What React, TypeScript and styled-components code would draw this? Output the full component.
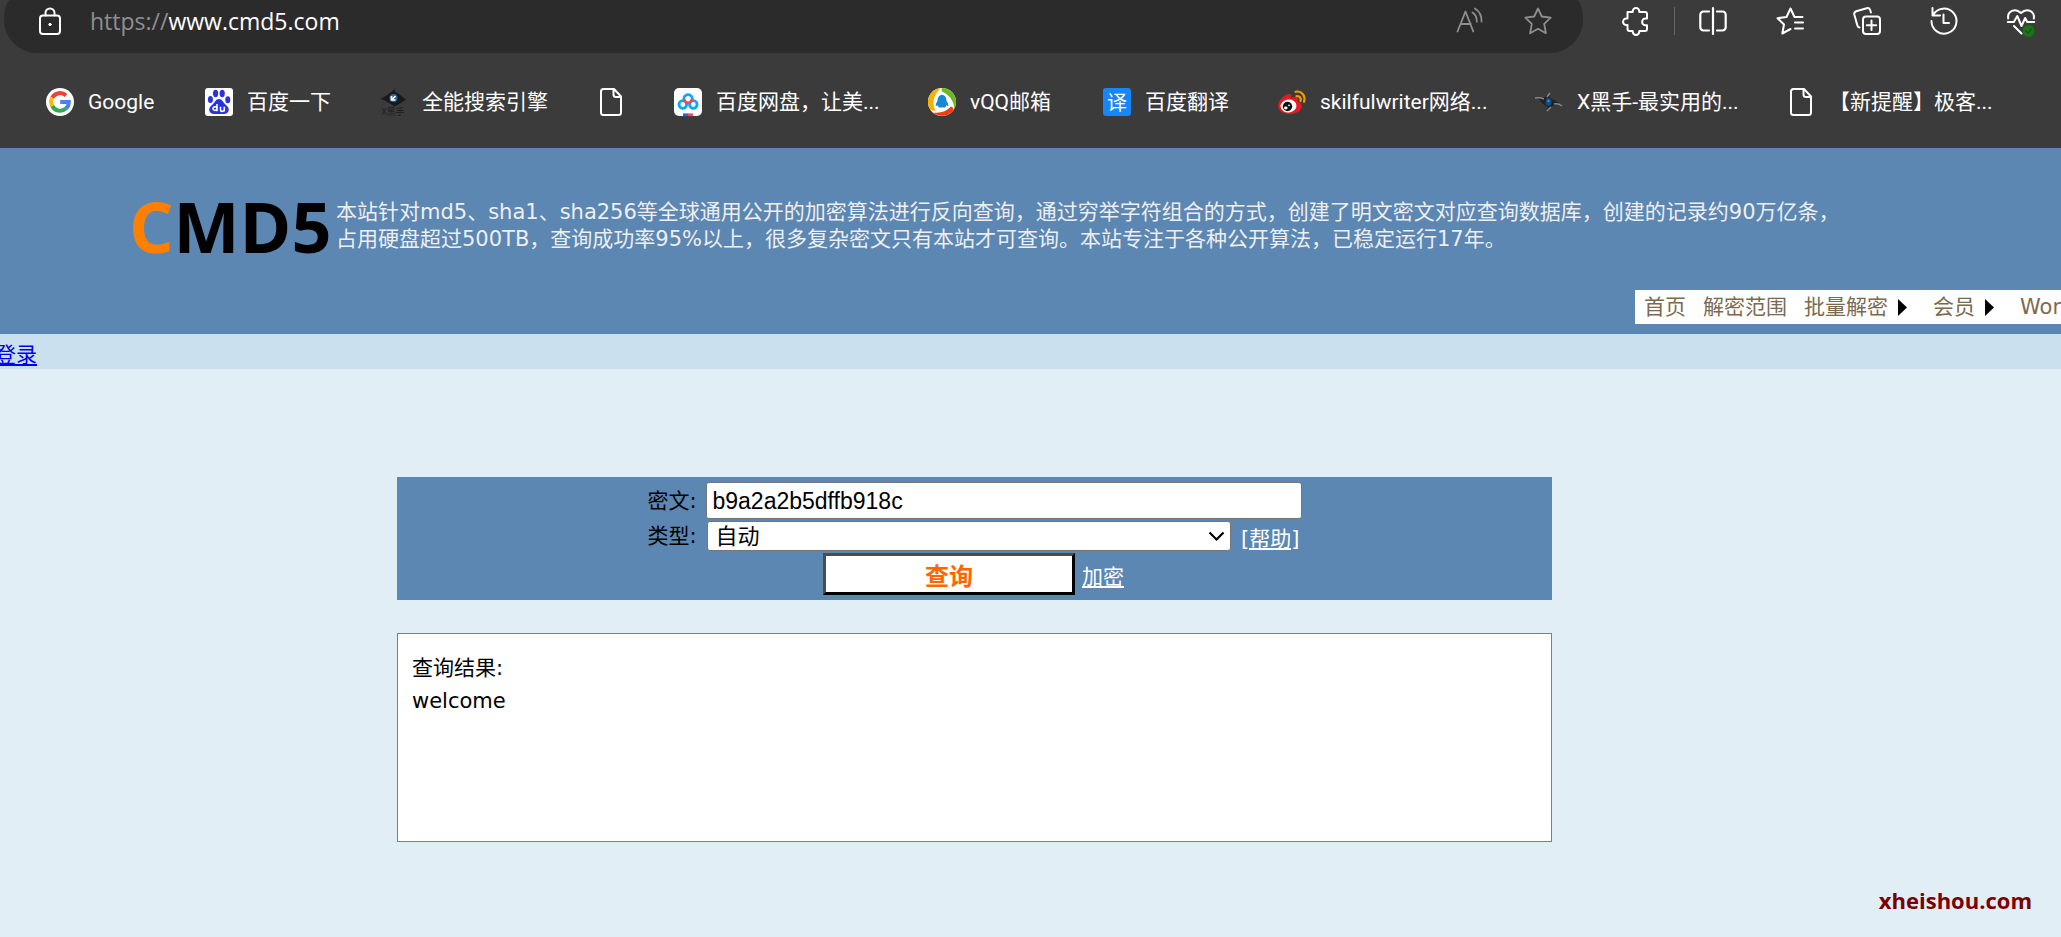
import React from 'react';
import styled, { createGlobalStyle } from 'styled-components';

const siteFont = '"DejaVu Sans", "Noto Sans CJK SC", sans-serif';
const chromeFont = '"Open Sans", "Noto Sans CJK SC", sans-serif';
const bookmarkFont = 'Roboto, "Noto Sans CJK SC", sans-serif';

const GlobalStyle = createGlobalStyle`
  *, *::before, *::after { box-sizing: border-box; }
  html { background: #e1eef6; }
  body { margin: 0; overflow-x: hidden; font-family: ${siteFont}; font-size: 21px; color: #000; }
  button, input, select { font: inherit; margin: 0; }
  svg { display: block; flex: none; overflow: visible; }
`;

const Page = styled.div`
  display: flex;
  flex-direction: column;
  min-height: 100vh;
`;

/* ---------- browser chrome ---------- */

const Browser = styled.header`
  background: #3b3b3b;
  font-family: ${chromeFont};
  color: #fff;
`;

const Toolbar = styled.div`
  display: flex;
  padding: 0 26px 0 4px;
`;

const AddressBar = styled.div`
  flex: 1;
  display: flex;
  align-items: center;
  height: 53px;
  padding: 0 31px 11px 32px;
  background: #2b2b2b;
  border-radius: 7px 7px 33px 33px / 20px 20px 33px 33px;
`;

const Url = styled.label`
  flex: 1;
  display: flex;
  align-items: center;
  margin-left: 26px;
  font-size: 23px;
  line-height: 32px;
  color: #8f8f8f;
`;

const UrlInput = styled.input`
  flex: 1;
  min-width: 0;
  padding: 0;
  border: 0;
  outline: 0;
  background: transparent;
  color: #fff;
`;

const IconButton = styled.button<{ $muted?: boolean }>`
  display: block;
  width: 28px;
  height: 28px;
  padding: 0;
  border: 0;
  background: none;
  color: ${(p) => (p.$muted ? '#8f8f8f' : '#fff')};
`;

const AddressActions = styled.div`
  display: flex;
  gap: 40px;
`;

const Tools = styled.div`
  display: flex;
  gap: 49px;
  margin-left: 39px;
  padding-top: 7px;
`;

const ToolPair = styled.div`
  display: flex;
  gap: 24px;
`;

const Divider = styled.span`
  width: 1px;
  height: 28px;
  background: #666;
`;

const Bookmarks = styled.nav`
  display: flex;
  gap: 49px;
  padding: 35px 46px 32px;
  overflow: hidden;
`;

const Bookmark = styled.a`
  display: flex;
  align-items: center;
  gap: 14px;
  height: 28px;
  color: #fff;
  text-decoration: none;
  white-space: nowrap;
`;

const BookmarkLabel = styled.span<{ $width: number }>`
  width: ${(p) => p.$width}px;
  font-family: ${bookmarkFont};
  font-size: 21px;
  line-height: 28px;
`;

/* ---------- site header ---------- */

const SiteHeader = styled.div`
  display: flex;
  flex-direction: column;
  justify-content: space-between;
  height: 186px;
  padding: 48px 0 10px;
  background: #5c87b2;
`;

const Brand = styled.div`
  display: flex;
  padding-left: 129px;
`;

const Logo = styled.a`
  width: 207px;
  font: bold 70px/60px "Open Sans", sans-serif;
  color: #000;
  text-decoration: none;
`;

const LogoAccent = styled.span`
  color: #ff8000;
`;

const Intro = styled.p`
  margin: 0;
  padding-top: 3px;
  color: #eee;
  line-height: 27px;
  white-space: nowrap;
`;

const Menu = styled.nav`
  align-self: flex-end;
  display: flex;
  width: 426px;
  height: 34px;
  padding-left: 9px;
  overflow: hidden;
  background: #fff;
`;

const MenuLink = styled.a<{ $gap: number }>`
  display: flex;
  align-items: center;
  gap: 10px;
  margin-right: ${(p) => p.$gap}px;
  color: #7a6a50;
  line-height: 34px;
  text-decoration: none;
  white-space: nowrap;
`;

const LoginStrip = styled.div`
  height: 35px;
  padding-top: 8px;
  background: #cae0ee;
  line-height: 27px;
`;

const LoginLink = styled.a`
  margin-left: -5px;
  color: #00e;
`;

/* ---------- query form ---------- */

const Main = styled.main`
  display: flex;
  flex-direction: column;
  align-items: center;
  gap: 33px;
  padding: 108px 112px 0 0;
`;

const QueryForm = styled.form`
  display: flex;
  flex-direction: column;
  align-items: center;
  gap: 1px;
  width: 100%;
  max-width: 1155px;
  padding: 5px 0;
  background: #5c87b2;
`;

const Field = styled.div`
  display: flex;
  align-items: center;
  width: 654px;
`;

const FieldLabel = styled.label`
  width: 58px;
  line-height: 28px;
  white-space: nowrap;
`;

const HashInput = styled.input`
  flex: 1;
  min-width: 0;
  height: 37px;
  padding: 1px 6px 0;
  border: 1px solid #767676;
  border-radius: 3px;
  background: #fff;
  color: #000;
  font: 23px "Liberation Sans", sans-serif;
`;

const SelectWrap = styled.div`
  position: relative;
  flex: 1;
  margin: 0 10px 0 1px;
`;

const TypeSelect = styled.select`
  appearance: none;
  display: block;
  width: 100%;
  height: 30px;
  padding: 1px 8px 0;
  border: 1px solid #767676;
  border-radius: 3px;
  background: #fff;
  color: #000;
  font: 22px/26px "Liberation Sans", "Noto Sans CJK SC", sans-serif;
`;

const Chevron = styled.svg`
  position: absolute;
  top: 10px;
  right: 6px;
  pointer-events: none;
`;

const WhiteLink = styled.a`
  padding: 2px 2px 0 0;
  color: #fff;
`;

const Actions = styled.div`
  display: flex;
  align-items: center;
  gap: 7px;
`;

const QueryButton = styled.button`
  width: 252px;
  height: 42px;
  padding: 2px 0 0;
  border: 3px solid;
  border-color: #4c4c4c #000 #000 #4c4c4c;
  background: #fff;
  color: #ff6600;
  font: bold 24px/32px "Noto Sans CJK SC", sans-serif;
`;

const Result = styled.section`
  width: 100%;
  max-width: 1155px;
  min-height: 209px;
  padding: 18px 14px;
  border: 1px solid #5c87b2;
  background: #fff;
  line-height: 33px;
`;

const Watermark = styled.footer`
  margin-top: auto;
  padding: 0 29px 22px 0;
  text-align: right;
  font: bold 22px/30px "Open Sans", sans-serif;
  color: #7b0000;
`;

/* ---------- icons ---------- */

const Line = ({ children, width = 2 }: { children: React.ReactNode; width?: number }) => (
  <svg width="28" height="28" viewBox="0 0 28 28" fill="none" stroke="currentColor" strokeWidth={width} strokeLinecap="round" strokeLinejoin="round">
    {children}
  </svg>
);

const LockIcon = () => (
  <Line>
    <rect x="4" y="8.5" width="20" height="18.5" rx="3" />
    <path d="M9.500 8.500V6a4.500 4.500 0 0 1 9 0v2.500" />
    <circle cx="14" cy="17.500" r="1.200" fill="currentColor" strokeWidth="1" />
  </Line>
);

const ReadIcon = () => (
  <Line width={1.8}>
    <path d="M1.500 24.500 9.500 4.500l7.800 20M4.500 17h10.200M16.500 5.500q4.500 3 4.300 9M19 1.500q7 4.500 6.500 13" />
  </Line>
);

const StarIcon = () => (
  <Line width={1.8}>
    <path d="M14 1.500l3.800 8 8.900 1.200-6.500 6.100 1.700 9.400L14 21.800l-7.900 4.400 1.700-9.400-6.500-6.100 8.900-1.200z" />
  </Line>
);

const PuzzleIcon = () => (
  <Line>
    <path d="M5.500 5h5.200v-.8a3.300 3.300 0 0 1 6.600 0V5H23a2 2 0 0 1 2 2v4.500h-1.500a3.300 3.300 0 0 0 0 6.800H25V22a2 2 0 0 1-2 2h-5.700v.600a3.300 3.300 0 0 1-6.600 0V24H7.500a2 2 0 0 1-2-2v-4H4.300a3.200 3.200 0 0 1 0-6.500h1.200z" />
  </Line>
);

const SplitIcon = () => (
  <Line width={2.2}>
    <path d="M10 4.500H4.500A3.200 3.200 0 0 0 1.300 7.700v12.600a3.200 3.200 0 0 0 3.200 3.200H10M18 4.500h5.500a3.200 3.200 0 0 1 3.200 3.200v12.600a3.200 3.200 0 0 1-3.200 3.200H18M14 1v26" />
  </Line>
);

const FavoritesIcon = () => (
  <Line>
    <path d="M26.500 10h-8l-4-8.500-4 8.500-9 1.200L8 17.500 6.300 26.500l8.200-4.500M19 15.500h8M19 21.500h8" />
  </Line>
);

const CollectionsIcon = () => (
  <Line>
    <rect x="10" y="9.500" width="17" height="17.500" rx="3" />
    <path d="M18.500 13.500v9.500M13.800 18.200h9.400M6.500 20.500q-1.800-.5-2.200-2.300L1.300 7.500Q.8 5 3.200 4.200l10.500-3q2.500-.6 3.400 1.600l.8 2.700" />
  </Line>
);

const HistoryIcon = () => (
  <Line>
    <path d="M2.500 1v7.500H10M3 8.200A12.500 12.500 0 1 1 1.500 14M13.500 7.500v8.500H19" />
  </Line>
);

const HealthIcon = () => (
  <Line>
    <path d="M1.200 11.500C0 4.500 8 .2 14 6c6-5.800 14-1.500 12.800 5.500M.8 15h6l3.500-6 4.200 10 3.700-8 2 4h7M7 19l7.500 7.500" />
    <circle cx="21.500" cy="24" r="6" fill="#107c10" stroke="none" />
    <path d="M18.800 24l2 2 3.600-4" stroke="#3b3b3b" strokeWidth="1.500" />
  </Line>
);

const GoogleIcon = () => (
  <svg width="28" height="28" viewBox="0 0 28 28" fill="none" strokeWidth="4">
    <circle cx="14" cy="14" r="14" fill="#fff" />
    <path d="M6.200 9.800A8.800 8.800 0 0 1 20 7.500" stroke="#ea4335" />
    <path d="M6.200 18A8.800 8.800 0 0 1 6.200 9.800" stroke="#fbbc05" />
    <path d="M6.200 18a8.800 8.800 0 0 0 13.600 2.600" stroke="#34a853" />
    <path d="M14.200 14h8.600c0 3-1.200 5.200-3 6.600" stroke="#4285f4" />
  </svg>
);

const PawShape = () => (
  <g>
    <ellipse cx="5.400" cy="11.500" rx="2.500" ry="3.500" />
    <ellipse cx="10.600" cy="5.500" rx="2.600" ry="3.700" />
    <ellipse cx="17.200" cy="5.500" rx="2.600" ry="3.700" />
    <ellipse cx="22.800" cy="11.800" rx="2.500" ry="3.500" />
    <path d="M14 11c3 0 4 3 6 5 2.500 2.500 4.500 4 3.500 7-1.200 3.500-5 3-9.500 3s-8.500.5-9.500-3c-1-3 1-4.500 3.500-7 2-2 3-5 6-5z" />
  </g>
);

const BaiduIcon = () => (
  <svg width="28" height="28" viewBox="0 0 28 28">
    <rect width="28" height="28" rx="3" fill="#fff" />
    <g fill="#2932e1"><PawShape /></g>
    <path d="M12 16v7.200M12 20.500a2 1.800 0 1 0 0 .1M15.500 18.700v3q0 1.700 1.800 1.700t2-1.700v-3 4.800" fill="none" stroke="#fff" strokeWidth="1.600" />
  </svg>
);

const EyeIcon = ({ labelled }: { labelled?: boolean }) =>
  labelled ? (
    <svg width="28" height="28" viewBox="0 0 28 28">
      <path d="M0 11Q7 8 16 0q-2 3-1 4 5 2 11 8-3 1-5 3-4 3-10 4l3-1Q6 13 4 12z" fill="#191919" />
      <circle cx="13.500" cy="10" r="4" fill="#27659b" />
      <path d="M11.500 8v4h4M12 11.500l3.500-3.500" stroke="#fff" strokeWidth="1.700" fill="none" />
      <text x="13" y="27" textAnchor="middle" fontSize="9" fill="#1b1b1b" fontFamily="Noto Sans CJK SC">X黑手</text>
    </svg>
  ) : (
    <svg width="28" height="28" viewBox="0 0 28 28">
      <path d="M0 10q4-1 8 0 4-1 7-5-2 4 2 6 5 2 10 7-4-1-7-1-4 1-8 6 2-4-1-5-5-3-6-6-3-2-5-2z" fill="#222" />
      <path d="M0 10q5-1 9 1M19 16q4-1 8 2M15 5l-3 4M12 23l4-4" stroke="#888" strokeWidth="1.500" fill="none" />
      <ellipse cx="13.500" cy="14" rx="3" ry="4" fill="#124b82" />
      <circle cx="13.500" cy="13" r="1.300" fill="#2d8bd6" />
    </svg>
  );

const FileIcon = () => (
  <Line>
    <path d="M6.500 1h10.500l7 7.500v16a2.500 2.500 0 0 1-2.500 2.500h-15A2.500 2.500 0 0 1 4 24.500v-21A2.500 2.500 0 0 1 6.500 1zM16.500 1v5.500a2.500 2.500 0 0 0 2.500 2.500h5" />
  </Line>
);

const PanIcon = () => (
  <svg width="28" height="28" viewBox="0 0 28 28" fill="none" strokeWidth="2.800">
    <rect width="28" height="28" rx="5" fill="#fff" />
    <circle cx="8.800" cy="16.500" r="3.800" stroke="#08a9f5" />
    <circle cx="19.300" cy="16.500" r="3.800" stroke="#08a9f5" />
    <path d="M9.800 11.500a4.300 4.300 0 1 1 8.500 0" stroke="#08a9f5" />
    <path d="M9.800 10.800q.7 3.500 4.200 4.200 3.500-.7 4.300-4.200" stroke="#f24957" />
    <path d="M9 26.800h5" stroke="#2563eb" />
    <path d="M14 26.800h5" stroke="#f24957" />
  </svg>
);

const QQMailIcon = () => (
  <svg width="28" height="28" viewBox="0 0 28 28">
    <circle cx="14" cy="14" r="14" fill="#fff" />
    <path d="M12.500 0A14 14 0 0 0 2.500 22q2.500 1 5 .5Q1.500 12 12.500 0z" fill="#f9ae08" />
    <path d="M14 0a14 14 0 0 1 12.500 20.500Q25 8 14 3.500 13 1.500 14 0z" fill="#6bb821" />
    <path d="M5 24.500Q16 26 23 18.500q2.500.5 2.500 3.500A14 14 0 0 1 5 24.500z" fill="#f23c0f" />
    <path d="M14 7c3 0 4.500 2.500 4.500 6 1.300 1.500 2 3.200 1.800 5-.7.300-1.300-.2-1.800-1-.5 1.500-1 2-1.500 2.500h-6c-.5-.5-1-1-1.500-2.500-.5.800-1 1.300-1.700 1-.2-1.800.5-3.500 1.700-5 0-3.500 1.500-6 4.500-6z" fill="#1688d5" />
  </svg>
);

const TranslateIcon = () => (
  <svg width="28" height="28" viewBox="0 0 28 28">
    <rect width="28" height="28" rx="3" fill="#1687f7" />
    <text x="14" y="21.500" textAnchor="middle" fontSize="20" fontFamily="Noto Sans CJK SC" fill="#fff">译</text>
  </svg>
);

const WeiboIcon = () => (
  <svg width="28" height="28" viewBox="0 0 28 28">
    <path d="M0 18C0 12 8 5 12 6c2 1 1 3 1 4 3-2 7-1 7 1 .500 2 0 2.500 0 3 3 .500 4 3 3.500 5.500C22.500 24 16 26.500 10.500 26 4 25.500 0 22 0 18z" fill="#e31b22" />
    <ellipse cx="10.500" cy="18" rx="8" ry="6.500" fill="#fff" transform="rotate(-8 10.500 18)" />
    <circle cx="9.500" cy="18.500" r="4.700" fill="#111" />
    <ellipse cx="7.800" cy="20" rx="1.800" ry="1.400" fill="#fff" />
    <circle cx="11" cy="17.300" r=".9" fill="#fff" />
    <path d="M17.500 3.800c6-1.500 10.500 4 8.500 10M18.500 8.200c3-.5 5 1.800 4 4.800" fill="none" stroke="#f59a00" strokeWidth="2.200" strokeLinecap="round" />
  </svg>
);

const MenuArrow = () => (
  <svg width="9" height="17" viewBox="0 0 9 17">
    <path d="M0 0l9 8.500L0 17z" />
  </svg>
);

/* ---------- data ---------- */

const bookmarks = [
  { label: 'Google', icon: <GoogleIcon />, width: 68 },
  { label: '百度一下', icon: <BaiduIcon />, width: 84 },
  { label: '全能搜索引擎', icon: <EyeIcon labelled />, width: 126 },
  { label: '', icon: <FileIcon />, width: 0 },
  { label: '百度网盘，让美...', icon: <PanIcon />, width: 163 },
  { label: 'vQQ邮箱', icon: <QQMailIcon />, width: 84 },
  { label: '百度翻译', icon: <TranslateIcon />, width: 84 },
  { label: 'skilfulwriter网络...', icon: <WeiboIcon />, width: 166 },
  { label: 'X黑手-最实用的...', icon: <EyeIcon />, width: 161 },
  { label: '【新提醒】极客...', icon: <FileIcon />, width: 166 },
];

const menu = [
  { label: '首页', gap: 17 },
  { label: '解密范围', gap: 17 },
  { label: '批量解密', gap: 26, arrow: true },
  { label: '会员', gap: 26, arrow: true },
  { label: 'Wor', gap: 0 },
];

export default function App() {
  return (
    <Page>
      <GlobalStyle />
      <Browser>
        <Toolbar>
          <AddressBar>
            <LockIcon />
            <Url>
              https://
              <UrlInput aria-label="网址" defaultValue="www.cmd5.com" />
            </Url>
            <AddressActions>
              <IconButton $muted aria-label="大声朗读"><ReadIcon /></IconButton>
              <IconButton $muted aria-label="收藏此页"><StarIcon /></IconButton>
            </AddressActions>
          </AddressBar>
          <Tools>
            <ToolPair>
              <IconButton aria-label="扩展"><PuzzleIcon /></IconButton>
              <Divider />
              <IconButton aria-label="拆分屏幕"><SplitIcon /></IconButton>
            </ToolPair>
            <IconButton aria-label="收藏夹"><FavoritesIcon /></IconButton>
            <IconButton aria-label="集锦"><CollectionsIcon /></IconButton>
            <IconButton aria-label="历史记录"><HistoryIcon /></IconButton>
            <IconButton aria-label="浏览器概要"><HealthIcon /></IconButton>
          </Tools>
        </Toolbar>
        <Bookmarks>
          {bookmarks.map((b, i) => (
            <Bookmark href="#" key={i} aria-label={b.label || '书签'}>
              {b.icon}
              {b.label && <BookmarkLabel $width={b.width}>{b.label}</BookmarkLabel>}
            </Bookmark>
          ))}
        </Bookmarks>
      </Browser>

      <SiteHeader>
        <Brand>
          <Logo href="#"><LogoAccent>C</LogoAccent>MD5</Logo>
          <Intro>
            本站针对md5、sha1、sha256等全球通用公开的加密算法进行反向查询，通过穷举字符组合的方式，创建了明文密文对应查询数据库，创建的记录约90万亿条，
            <br />
            占用硬盘超过500TB，查询成功率95%以上，很多复杂密文只有本站才可查询。本站专注于各种公开算法，已稳定运行17年。
          </Intro>
        </Brand>
        <Menu>
          {menu.map((m) => (
            <MenuLink href="#" key={m.label} $gap={m.gap}>
              {m.label}
              {m.arrow && <MenuArrow />}
            </MenuLink>
          ))}
        </Menu>
      </SiteHeader>
      <LoginStrip>
        <LoginLink href="#">登录</LoginLink>
      </LoginStrip>

      <Main>
        <QueryForm onSubmit={(e) => e.preventDefault()}>
          <Field>
            <FieldLabel htmlFor="hash">密文:</FieldLabel>
            <HashInput id="hash" type="text" defaultValue="b9a2a2b5dffb918c" />
          </Field>
          <Field>
            <FieldLabel htmlFor="type">类型:</FieldLabel>
            <SelectWrap>
              <TypeSelect id="type">
                <option>自动</option>
              </TypeSelect>
              <Chevron width="17" height="11" viewBox="0 0 17 11" fill="none" stroke="#000" strokeWidth="2.200">
                <path d="M1.500 1.500l7 7 7-7" />
              </Chevron>
            </SelectWrap>
            <WhiteLink href="#">[帮助]</WhiteLink>
          </Field>
          <Actions>
            <QueryButton type="submit">查询</QueryButton>
            <WhiteLink href="#">加密</WhiteLink>
          </Actions>
        </QueryForm>
        <Result>
          <div>查询结果:</div>
          <div>welcome</div>
        </Result>
      </Main>
      <Watermark>xheishou.com</Watermark>
    </Page>
  );
}
